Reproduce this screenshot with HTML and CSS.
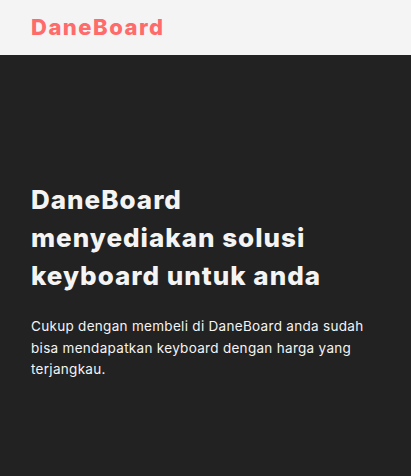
FILE: index.html
```html
<!DOCTYPE html>
<html lang="id">
<head>
<meta charset="utf-8">
<title>DaneBoard</title>
<link rel="stylesheet" href="styles.css">
</head>
<body>
<header class="header">
  <div class="logo">DaneBoard</div>
</header>
<section class="hero">
  <h1 class="hero-title">DaneBoard menyediakan solusi keyboard untuk anda</h1>
  <p class="hero-text">Cukup dengan membeli di DaneBoard anda sudah bisa mendapatkan keyboard dengan harga yang terjangkau.</p>
</section>
</body>
</html>
```

FILE: styles.css
```css
* { box-sizing: border-box; }
html, body { margin: 0; padding: 0; }
body {
  font-family: Inter, "Open Sans", "Liberation Sans", sans-serif;
  background: #222222;
  min-height: 476px;
}
.header {
  height: 55px;
  background: #f4f4f4;
  display: flex;
  align-items: center;
  padding: 0 31px 2px;
}
.logo {
  color: #ff6b6b;
  font-weight: 800;
  font-size: 22px;
  letter-spacing: 1.5px;
}
.hero {
  background: #222222;
  padding: 126px 31px 80px;
  color: #f4f4f4;
}
.hero-title {
  margin: 0;
  font-size: 26px;
  font-weight: 800;
  line-height: 38px;
  letter-spacing: 1px;
  max-width: 340px;
}
.hero-text {
  margin: 21px 0 0;
  font-size: 13.5px;
  line-height: 21.5px;
  letter-spacing: 0.3px;
  max-width: 350px;
}
```
